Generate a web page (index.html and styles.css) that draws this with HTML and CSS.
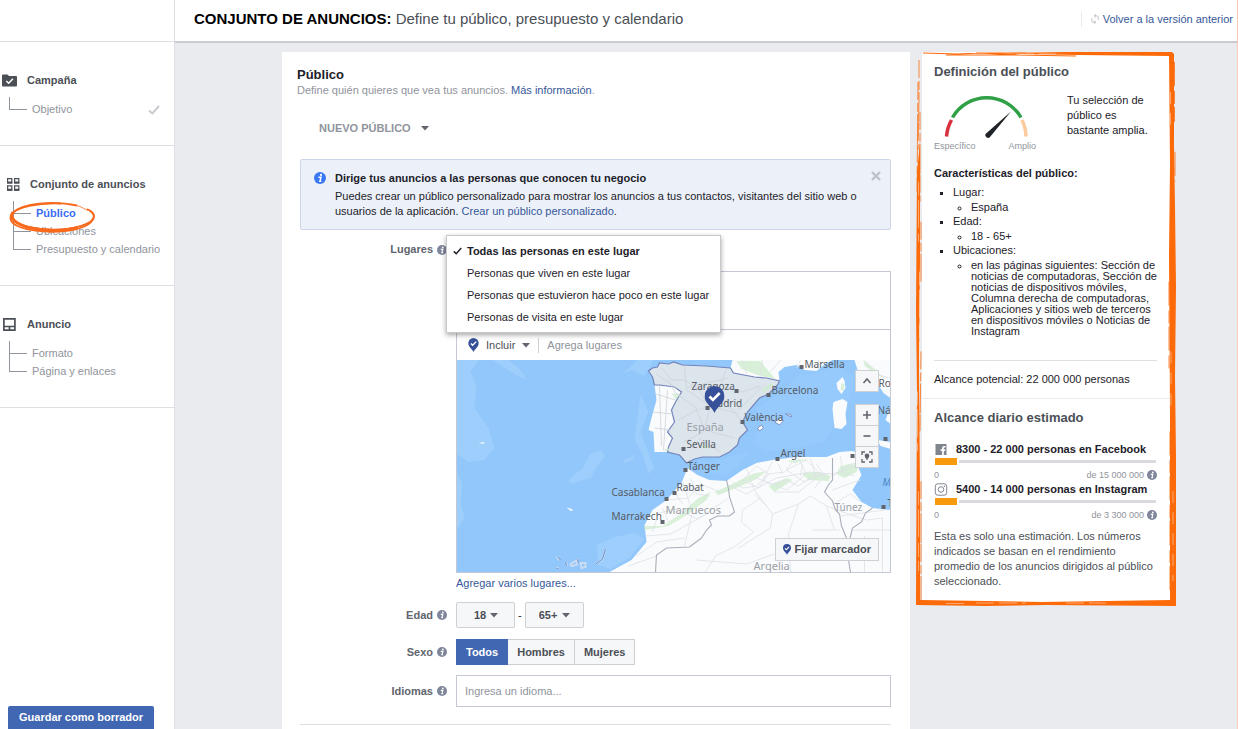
FILE: index.html
```html
<!DOCTYPE html>
<html lang="es">
<head>
<meta charset="utf-8">
<title>Conjunto de anuncios</title>
<link rel="stylesheet" href="styles.css">
</head>
<body>
<svg class="defs" aria-hidden="true">
  <symbol id="info" viewBox="0 0 12 12"><circle cx="6" cy="6" r="6" fill="currentColor"/><circle cx="7" cy="2.900" r="1.100" fill="#fff"/><path d="M4.500 5.300H7L5.900 9.200H7.300" fill="none" stroke="#fff" stroke-width="1.400"/></symbol>
  <symbol id="caret" viewBox="0 0 8 5"><path d="M0 0h8L4 4.6z" fill="currentColor"/></symbol>
  <symbol id="pin" viewBox="0 0 20 27"><path d="M10 0a10 10 0 0 1 10 10c0 7-7 10-10 17C7 20 0 17 0 10A10 10 0 0 1 10 0z" fill="#365199"/><path d="M5 10.500l3.400 3.500L15.200 7" fill="none" stroke="#fff" stroke-width="2.600"/></symbol>
  <symbol id="check" viewBox="0 0 12 10"><path d="M1 5.500l3.300 3L11 1" fill="none" stroke="currentColor" stroke-width="1.900"/></symbol>
</svg>
<div class="app">
  <nav class="sidebar" aria-label="Pasos">
    <div class="sidebar-top"></div>
    <section class="step">
      <h2 class="step-title"><svg class="step-icon" viewBox="0 0 15 13"><path d="M0 1.500Q0 .5 1 .5h4.500L7 2h7q1 0 1 1v8.500q0 1-1 1H1q-1 0-1-1z" fill="#4b4f56"/><path d="M4.300 7l2.400 2.300 4.200-4.600" fill="none" stroke="#fff" stroke-width="1.500"/></svg>Campaña</h2>
      <ul class="tree">
        <li><a href="#">Objetivo</a><svg class="done" aria-hidden="true"><use href="#check"/></svg></li>
      </ul>
    </section>
    <section class="step step-nested">
      <h2 class="step-title"><svg class="step-icon" viewBox="0 0 15 13"><g fill="none" stroke="#4b4f56" stroke-width="1.200"><path d="M1.600.6h4.200v4.300H1.600zM8.600.6h4.200v4.300H8.600zM1.600 7.900h4.200v4.300H1.600zM8.600 7.900h4.200v4.300H8.600z"/></g><path d="M1 3.500h5.300v2H1zM8 3.500h5.300v2H8zM1 10.800h5.300v2H1zM8 10.800h5.300v2H8z" fill="#4b4f56"/></svg>Conjunto de anuncios</h2>
      <ul class="tree">
        <li><a href="#" class="current">Público</a></li>
        <li><a href="#">Ubicaciones</a></li>
        <li><a href="#">Presupuesto y calendario</a></li>
      </ul>
      <svg class="scribble" viewBox="0 0 88 32" fill="none" stroke="#f8691c" aria-hidden="true">
        <path d="M68 4.500C50 .5 22 1 9 8-2 14-1 22 12 26.500c19 6 47 5.500 62-.5 12-5 14-12 6-17" stroke-width="1.800"/>
        <path d="M52 2.500C30 1.500 6 6 3 14c-2 8 15 14 39 14.500 25 .5 43-6.500 43-13.500 0-3-3-5-7-7" stroke-width="1.800"/>
        <path d="M4 11c-5 8 7 15 27 17.500 14 1.500 28 1 38-2" stroke-width="3"/>
        <path d="M62 3l9 2.500 8 4" stroke-width=".8"/>
      </svg>
    </section>
    <section class="step">
      <h2 class="step-title"><svg class="step-icon" viewBox="0 0 15 13"><path d="M1.900.9h11v11.200h-11z M2 8.500h11 M7.500 8.500v3" fill="none" stroke="#4b4f56" stroke-width="1.700"/></svg>Anuncio</h2>
      <ul class="tree">
        <li><a href="#">Formato</a></li>
        <li><a href="#">Página y enlaces</a></li>
      </ul>
    </section>
    <button class="save" type="button">Guardar como borrador</button>
  </nav>

  <div class="main">
    <header class="topbar">
      <h1><strong>CONJUNTO DE ANUNCIOS:</strong> Define tu público, presupuesto y calendario</h1>
      <a class="back" href="#"><svg viewBox="0 0 10 12" aria-hidden="true"><path d="M4.500 2H7q2 0 2 2v3M5.500 10H3Q1 10 1 8V5M6.200 0L4 2l2.200 2M3.800 8L6 10l-2.200 2" fill="none" stroke="#b0b3b8"/></svg>Volver a la versión anterior</a>
    </header>

    <div class="content">
      <main class="card">
        <h2 class="card-title">Público</h2>
        <p class="card-sub">Define quién quieres que vea tus anuncios. <a href="#">Más información</a>.</p>
        <button class="audience" type="button">NUEVO PÚBLICO <svg class="caret"><use href="#caret"/></svg></button>

        <div class="notice">
          <svg class="notice-icon" aria-hidden="true"><use href="#info"/></svg>
          <div class="notice-text">
            <h3>Dirige tus anuncios a las personas que conocen tu negocio</h3>
            <p>Puedes crear un público personalizado para mostrar los anuncios a tus contactos, visitantes del sitio web o usuarios de la aplicación. <a href="#">Crear un público personalizado</a>.</p>
          </div>
          <button class="close" type="button" aria-label="Cerrar"><svg viewBox="0 0 10 10"><path d="M1 1l8 8M9 1L1 9" stroke="#bec3c9" stroke-width="2.400"/></svg></button>
        </div>

        <div class="row row-places">
          <label class="label" for="places">Lugares <svg class="info"><use href="#info"/></svg></label>
          <div class="field">
            <ul class="menu" role="menu">
              <li><button type="button" class="selected" role="menuitemradio" aria-checked="true"><svg class="tick" aria-hidden="true"><use href="#check"/></svg>Todas las personas en este lugar</button></li>
              <li><button type="button" role="menuitemradio" aria-checked="false">Personas que viven en este lugar</button></li>
              <li><button type="button" role="menuitemradio" aria-checked="false">Personas que estuvieron hace poco en este lugar</button></li>
              <li><button type="button" role="menuitemradio" aria-checked="false">Personas de visita en este lugar</button></li>
            </ul>
            <div class="places">
              <div class="chosen"></div>
              <div class="add">
                <button class="include" type="button"><svg class="pin-small"><use href="#pin"/></svg>Incluir <svg class="caret"><use href="#caret"/></svg></button>
                <input id="places" type="text" placeholder="Agrega lugares">
              </div>
              <div class="map">
                <svg class="map-art" viewBox="0 0 434 212" preserveAspectRatio="xMidYMid slice" role="img" aria-label="Mapa de España">
                  <path fill="#92c7fb" d="M0 0h434v212H0z"/>
                  <g fill="#9dcefc">
                    <path d="M0 0h22l-8 12 6 14-2 22 14 20 6 20-10 12-16 2-12-8zM36 0h16l12 10 6 10-12-6zM165 14l10-4 12 6 6-8 4-8h-16l-6 6zM184 34l8 18-8 20 6 16 8 20-6 6-6-20-8-14z"/>
                    <path d="M134 94l10-4 4 6-8 12-6 10-20 6-2-4 14-12zM168 100l12-6-4 6-10 4zM140 185l18-8 20-4 10 6-14 18-20 12-12-4z"/>
                    <path d="M300 48l22-14 20-18 28-6 12-6 16 14-6 22-12 20-12 22-30 6-30 4-12-10 8-18zM234 104l30-4 30-10-12 16-14 10-20-4z" opacity=".45"/>
                    <path d="M0 112l6 12-2 20 4 14-8 12z"/>
                  </g>
                  <g class="land">
                    <path d="M198 25l2 15-5 18-3 12 5 2 1 20 13 0 12 3 7-20V27z"/>
                    <path d="M276 0l-2 8 3 5 21 4 25 4-1-9 6-5 12-2 8 5 12 1 10-8 6-3z"/>
                    <path d="M398 0l3 10 9 5 12 10 5 8 7 5V0z"/>
                    <path d="M386 17l2 4 1 7-4 6-4-5-1-6zM377 42l9-3 5 3-2 12 1 10-5 5-7-1-1-10-1-9z"/>
                    <path d="M421 80l13 2v7l-10-3zM429 60l5-14v18z"/>
                    <path d="M318 62l6-4 3 3-4 4zM329 54l5 0 1 3zM301 68l4-3 2 3-4 3z" stroke="#7d93c2"/>
                    <path d="M153 212l22-12 15-18-2-17 8-15 14-10 15-17 6-15 10 7 12 5 17 1 16-11 14-7 16-3 24-3 30 0 13-5 13-1 9 4-4 10 4 10-9 15 9 12 11 6 18 2v62z"/>
                    <path d="M22 83l6-1-1 2zM110 147l7 3-3 1z"/>
                    <path d="M149 189l-3 10-7 5M100 197l3 3M109 202l2 4M100 207l2 2M114 204l7-4-1 5-5 1zM124 203l5 0 0 4-4 1z" fill="none" stroke="#c9dcf2" stroke-width="2"/>
                    <path d="M149 189l-3 10-7 5M101 197l3 3M109 202l1 4M100 208l2 1M121 199l1 4" fill="none" stroke="#6d8fc8"/>
                  </g>
                  <path fill="#dce4ec" d="M192 11l4-3 5-1 2-4 9 1 5-2 9 3 24 1 24 2 3 5 21 4 12 1 13 3-2 4-9 9-9 4-12 14-5 10 5 8-8 8-2 7-8 7-10 5-17 0-8 2-8 4-7-8-12-3 1-5 4-9-5-6 7-10-3-12 4-8 6-10-7-5-15-2-5 0-2-8z"/>
                  <path fill="none" stroke="#7485ba" stroke-width="1.200" d="M198 25l-1-4-1-4-4-6 4-3 5-1 2-4 9 1 5-2 9 3 24 1 24 2 3 5 21 4 12 1 13 3-2 4-9 9-9 4-12 14-5 10 5 8-8 8-2 7-8 7-10 5-17 0-8 2-8 4-7-8-12-3 1-5 4-9-5-6 7-10-3-12 4-8 6-10-7-5-15-2z"/>
                  <g fill="#cdeccd" opacity=".75">
                    <path d="M188 170l24-4 20-12 18-14 4-8-12 6-18 16-18 12-18 0zM258 132l18-8 20-10 14-3-10 8-18 8-20 8zM345 113l16-1 13 4-2 5-20-1zM384 106l18-4-2 10-12 6-8-4zM312 126l18-8 6 2-18 12zM330 101l22-2-14 4z"/>
                    <path d="M280 1l24 0 8 10 7 8-18-4-16-6zM205 90l10-2-4 3zM385 23l3 1-1 7-3-1zM407 0l10 8 13 12-8-5-14-9zM243 86l13-1-8 4zM305 30l9-7 3 2-10 8zM215 33l9 2-5 4z"/>
                  </g>
                  <g fill="none" stroke="#cdd3db" stroke-width=".8">
                    <path d="M205 8l10 12 13 0 15 10 10 18 17-20 16 4 18-6M200 14l20 14M228 6l2 24 24 16-7 26-20 10M254 46l28 8M270 8l-8 24 22 28M212 20l6 12 24 18 6-2M222 60l18-10 8 20 30 8M242 78l22 14M282 50l26-26M230 28l42-10M199 34l20 6M196 52l20 2M198 68l16 2M203 26l2 60M211 30l-4 60"/>
                  </g>
                  <g fill="none" stroke="#dde1e7" stroke-width=".8">
                    <path d="M286 0l4 14M306 0l-2 17M324 0l-10 12M344 0l-4 8M362 0v10M410 2l6 12 18 4"/>
                    <path d="M210 140l22-2 12-14 20 8M226 122l10 30-8 34M195 155l24-6 22 10 30-20M190 176l24-2 40 -22M180 196l20-14 28-4M172 206l28-10M270 124l20 10 30-16 34-6 22 2 24-8M290 108l8 22 6 8-18 12 -1 12 12 10-18 14-20 10-10 16M304 138l12 16-2 14-32 20M316 154l26-10 12-8 16 10 8 24M310 146l-12-12M342 144l-10 30 2 38M316 102l-10 18 24 10 20-16-8-16M354 98l6 20-18 14-24 0M376 116l18-12 8 6M376 130l16-6 12-4M380 142l14-8 10 8M370 146l16 6 24 8 16-2 0 54M384 156l44-6M396 170l38 0M286 120l14-14 12 8-10 14zM330 110l20-10 14 14-16 8zM356 170l28 0M240 200l50 4 28-10M408 176v36"/>
                    <path d="M276 122l10 6 14-2 12-12 16-2 8-10M300 118l14 6 16-4 12 6 14-10 16-2M360 104l8 12-10 12M384 96l2 16 12 4M322 104l4 10M346 104l-2 12M234 118l6 16 14 2M218 132l8 12M206 148l6 14M200 160l-4 12"/>
                  </g>
                  <g fill="none" stroke="#a9afba" stroke-width="1.100">
                    <path d="M270 120l2 9 1 8 5 15-5 4-12 0-8 4 2 5-5 5-5 8-12 9-23 1-10 7-1 17"/>
                    <path d="M376 98v22l-4 5-4 7 8 9 3 9 4 4 2 12 5 12 1 16 3 18M416 148l-7 5-4 9-9 6-3 12"/>
                  </g>
                  <g fill="#61656d">
                    <path d="M278 29h4v4h-4zM343 5h4v4h-4zM310 33h4v4h-4zM284 60h4v4h-4zM249 46h4v4h-4zM225 87h4v4h-4zM319 97h4v4h-4zM227 108h4v4h-4zM216 131h4v4h-4zM208 137h4v4h-4zM204 160h4v4h-4zM427 77h4v4h-4zM394 94h4v4h-4zM425 145h4v4h-4z"/>
                  </g>
                  <g class="places-text">
                    <text x="348" y="8">Marsella</text>
                    <text x="315" y="34">Barcelona</text>
                    <text x="235" y="30">Zaragoza</text>
                    <text x="252" y="47">Madrid</text>
                    <text x="288" y="61">València</text>
                    <text x="230" y="88">Sevilla</text>
                    <text x="324" y="97">Argel</text>
                    <text x="231" y="110">Tánger</text>
                    <text x="220" y="131">Rabat</text>
                    <text x="155" y="136">Casablanca</text>
                    <text x="155" y="160">Marrakech</text>
                    <text x="422" y="27">Roma</text>
                    <text x="421" y="54">Nápoles</text>
                    <text x="431" y="147">Trípoli</text>
                    <text x="426" y="126" fill="#4b86c8" font-style="italic">Mar</text>
                  </g>
                  <g class="country-text">
                    <text x="230" y="71">España</text>
                    <text x="209" y="154">Marruecos</text>
                    <text x="378" y="151" class="minor">Túnez</text>
                    <text x="297" y="210">Argelia</text>
                  </g>
                  <use href="#pin" x="248" y="26" width="20" height="27"/>
                </svg>
                <div class="map-tools">
                  <button type="button" aria-label="Contraer" class="tool tool-up"><svg viewBox="0 0 12 12"><path d="M2.500 8L6 4l3.500 4" fill="none" stroke="#61656d" stroke-width="1.500"/></svg></button>
                  <button type="button" aria-label="Acercar" class="tool"><svg viewBox="0 0 12 12"><path d="M6 2v8M2 6h8" stroke="#61656d" stroke-width="1.600"/></svg></button>
                  <button type="button" aria-label="Alejar" class="tool"><svg viewBox="0 0 12 12"><path d="M2.500 6h7" stroke="#61656d" stroke-width="1.600"/></svg></button>
                  <button type="button" aria-label="Centrar" class="tool"><svg viewBox="0 0 12 12"><path d="M1 4V1h3M8 1h3v3M11 8v3H8M4 11H1V8" fill="none" stroke="#61656d" stroke-width="1.300"/><path d="M6 2.500a2.300 2.300 0 0 1 2.300 2.500C8.300 6.600 6.600 7.500 6 9.500 5.400 7.500 3.700 6.600 3.700 5A2.300 2.300 0 0 1 6 2.500z" fill="#61656d"/></svg></button>
                </div>
                <button class="drop-pin" type="button"><svg viewBox="0 0 20 27"><use href="#pin"/></svg>Fijar marcador</button>
              </div>
            </div>
            <a class="bulk" href="#">Agregar varios lugares...</a>
          </div>
        </div>

        <div class="row row-age">
          <label class="label" for="age-min">Edad <svg class="info"><use href="#info"/></svg></label>
          <div class="field ages">
            <span class="select"><select id="age-min"><option>18</option></select><svg class="caret"><use href="#caret"/></svg></span>
            <span>-</span>
            <span class="select select-wide"><select aria-label="Edad máxima"><option>65+</option></select><svg class="caret"><use href="#caret"/></svg></span>
          </div>
        </div>

        <div class="row row-sex">
          <span class="label" id="sex">Sexo <svg class="info"><use href="#info"/></svg></span>
          <div class="field segments" role="group" aria-labelledby="sex">
            <button type="button" class="on" aria-pressed="true">Todos</button><button type="button" aria-pressed="false">Hombres</button><button type="button" aria-pressed="false">Mujeres</button>
          </div>
        </div>

        <div class="row row-lang">
          <label class="label" for="lang">Idiomas <svg class="info"><use href="#info"/></svg></label>
          <div class="field"><input class="lang" id="lang" type="text" placeholder="Ingresa un idioma..."></div>
        </div>
        <hr class="rule">
      </main>

      <aside class="summary">
        <section class="definition">
          <h2>Definición del público</h2>
          <div class="gauge-row">
            <div class="gauge">
              <svg viewBox="0 0 106 46" aria-hidden="true">
                <g fill="none" stroke-width="3.500">
                  <path d="M12.500 43.500A39.500 39.500 0 0 1 17.500 27" stroke="#d9303e"/>
                  <path d="M18.500 24.500A39.500 39.500 0 0 1 87 24.500" stroke="#2fa045"/>
                  <path d="M88 27A39.500 39.500 0 0 1 92 43.500" stroke="#fbcb9d"/>
                </g>
                <path d="M51.500 41L77 18.500 56 44q-1.500 1.700-3.500.2T51.500 41z" fill="#1f2328"/>
              </svg>
              <div class="gauge-ends"><span>Específico</span><span>Amplio</span></div>
            </div>
            <p>Tu selección de público es bastante amplia.</p>
          </div>
          <h3>Características del público:</h3>
          <ul class="traits">
            <li>Lugar:<ul><li>España</li></ul></li>
            <li>Edad:<ul><li>18 - 65+</li></ul></li>
            <li>Ubicaciones:<ul><li>en las páginas siguientes: Sección de noticias de computadoras, Sección de noticias de dispositivos móviles, Columna derecha de computadoras, Aplicaciones y sitios web de terceros en dispositivos móviles o Noticias de Instagram</li></ul></li>
          </ul>
          <p class="potential">Alcance potencial: 22 000 000 personas</p>
        </section>
        <section class="reach">
          <h2>Alcance diario estimado</h2>
          <div class="network">
            <h3><svg viewBox="0 0 13 13" aria-hidden="true"><path d="M1 1h11v11H9.300V8h1.300l.2-1.700H9.300V5.200q0-.8.900-.8h.8V2.900H9.600q-2 0-2 2v1.400H6.200V8h1.400v4H1z" fill="#7f858f"/></svg>8300 - 22 000 personas en Facebook</h3>
            <div class="bar"><span class="bar-fill"></span></div>
            <div class="scale"><span>0</span><span>de 15 000 000 <svg class="info"><use href="#info"/></svg></span></div>
          </div>
          <div class="network">
            <h3><svg viewBox="0 0 13 13" aria-hidden="true"><g fill="none" stroke="#7f858f"><rect x=".8" y=".8" width="11.400" height="11.400" rx="2.500"/><circle cx="6.500" cy="6.500" r="2.800"/></g><circle cx="9.900" cy="3.200" r=".7" fill="#7f858f"/></svg>5400 - 14 000 personas en Instagram</h3>
            <div class="bar"><span class="bar-fill"></span></div>
            <div class="scale"><span>0</span><span>de 3 300 000 <svg class="info"><use href="#info"/></svg></span></div>
          </div>
          <p class="note">Esta es solo una estimación. Los números indicados se basan en el rendimiento promedio de los anuncios dirigidos al público seleccionado.</p>
        </section>
        <svg class="frame" viewBox="0 0 261 555" preserveAspectRatio="none" aria-hidden="true">
          <g fill="#fd6a0a">
            <path d="M90 1l60-1 106 0 2 2v3l-6-1-90-1-60-1z"/>
            <path d="M253 3l5 0 0 92 1 60 1 80-1 90 1 80 0 148-6 0 0-190-1-160 1-90z"/>
            <path d="M0 549l5 0 120 2 130-2h5v6l-130-1-60 1-70-1z"/>
            <path d="M1 120l3-30 0 120-1 110 1 120 0 110h-4l1-210-1-80z"/>
          </g>
          <g fill="none" stroke="#fd6a0a">
            <path d="M7 1l35 1 22-1 40 2M30 3l70 0 60 1M60 1l50 0" stroke-width="1.200"/>
            <path d="M3 8l0 40-1 50M4 60l0 90M2 30l-1 110M5 170l0 60M5 300l-1 80M5 430l0 120" stroke-width=".8" stroke-dasharray="18 3 9 2 30 1"/>
            <path d="M258.500 10v60M253 230v90M259 100v30M254 380v160" stroke-width=".8" stroke-dasharray="24 5 13 3"/>
          </g>
          <g fill="none" stroke="#fff" stroke-width=".7" opacity=".6">
            <path d="M2.500 130v60M3.500 220v90M1.500 340v60M2.500 440v80" stroke-dasharray="14 4 28 6"/>
            <path d="M255 300v60M257 440v90M254.500 40v40" stroke-dasharray="12 9"/>
            <path d="M60 552h50M150 552h40M100 2h40M30 552.500h20" stroke-dasharray="18 5"/>
          </g>
        </svg>
      </aside>
    </div>
  </div>
</div>
</body>
</html>
```
FILE: styles.css
```css
* { box-sizing: border-box; }

body {
  margin: 0;
  background: #e9ebee;
  color: #1d2129;
  font: 11px/15px "Liberation Sans", Arial, sans-serif;
}

h1, h2, h3, p, ul { margin: 0; padding: 0; }
h2, h3 { font-weight: bold; }
a { color: #365899; text-decoration: none; }
button, input, select { font: inherit; color: inherit; }
button { cursor: pointer; }
svg { display: block; flex: none; }
input::placeholder { color: #90949c; opacity: 1; }

.defs { position: absolute; width: 0; height: 0; }
.caret { width: 8px; height: 5px; color: #61656d; }
.info { width: 10px; height: 10px; color: #7f869a; }

.app {
  display: grid;
  grid-template-columns: 175px 1fr;
  height: 100vh;
  overflow: hidden;
  border-right: 1px solid #fbc9ae;
}

/* Sidebar */
.sidebar {
  display: flex;
  flex-direction: column;
  min-height: 0;
  background: #fff;
  border-right: 1px solid #dddfe2;
}
.sidebar-top { height: 42px; border-bottom: 1px solid #dddfe2; }
.step {
  position: relative;
  padding: 30px 14px 27px 2px;
  border-bottom: 1px solid #dddfe2;
}
.step-nested { padding-left: 6px; }
.step-title {
  display: flex;
  align-items: center;
  gap: 10px;
  font-size: 11px;
  line-height: 16px;
  color: #4b4f56;
}
.step-nested .step-title { gap: 9px; }
.step-icon { width: 15px; height: 13px; }
.tree { margin: 9px 0 0 7px; list-style: none; color: #90949c; }
.tree::before { content: ""; display: block; height: 3px; border-left: 1px solid #90949c; }
.tree li {
  display: flex;
  height: 18px;
  line-height: 18px;
  border-left: 1px solid #90949c;
  white-space: nowrap;
}
.tree li::before {
  content: "";
  flex: none;
  width: 17px;
  height: 9px;
  margin-right: 5px;
  border-bottom: 1px solid #90949c;
}
.tree li:last-child { border-left: 0; }
.tree li:last-child::before { border-left: 1px solid #90949c; }
.tree a { color: #90949c; }
.tree .current { color: #3b6df5; font-weight: bold; }
.done { width: 12px; height: 10px; margin: 5px 0 0 auto; color: #c6c9ce; }
.scribble { position: absolute; left: 9px; top: 55px; width: 88px; height: 32px; }
.save {
  align-self: flex-start;
  margin: auto 0 0 8px;
  padding: 0 11px;
  height: 23px;
  border: 0;
  border-radius: 2px 2px 0 0;
  background: #4267b2;
  color: #fff;
  font-weight: bold;
}

/* Top bar */
.main { display: flex; flex-direction: column; min-width: 0; min-height: 0; }
.topbar {
  display: flex;
  flex: none;
  align-items: center;
  justify-content: space-between;
  height: 43px;
  padding: 0 4px 3px 19px;
  background: #fff;
  border-bottom: 2px solid #c9cbd1;
}
.topbar h1 { font-size: 15px; font-weight: normal; line-height: 20px; color: #4b4f56; }
.topbar strong { color: #000; }
.back {
  display: flex;
  align-items: center;
  gap: 4px;
  padding-left: 9px;
  border-left: 1px solid #e9ebee;
}
.back svg { width: 8px; height: 10px; }

.content {
  display: flex;
  flex: 1;
  align-items: flex-start;
  gap: 12px;
  min-height: 0;
  padding: 9px 67px 0 107px;
}

/* Audience card */
.card { flex: 1; min-width: 0; min-height: 690px; padding: 15px 19px 20px 18px; background: #fff; }
.card-title { margin-left: -3px; font-size: 13px; line-height: 16px; }
.card-sub { margin-left: -3px; color: #90949c; }
.audience {
  display: flex;
  align-items: center;
  gap: 10px;
  height: 30px;
  margin: 15px 0 16px 19px;
  padding: 0;
  border: 0;
  background: none;
  color: #90949c;
  font-weight: bold;
}
.notice {
  display: flex;
  align-items: flex-start;
  padding: 11px 9px 10px 13px;
  border: 1px solid #ccd6e8;
  border-radius: 2px;
  background: #ecf1f9;
}
.notice-icon { width: 12px; height: 12px; margin: 1px 9px 0 0; color: #3b78f3; }
.notice-text { flex: 1; }
.notice-text h3 { margin-bottom: 3px; font-size: 11px; }
.close { padding: 0; border: 0; background: none; }
.close svg { width: 10px; height: 10px; }

/* Form rows */
.row { display: grid; grid-template-columns: 147px 1fr; column-gap: 9px; }
.label {
  display: flex;
  align-items: center;
  justify-content: flex-end;
  gap: 4px;
  color: #61656d;
  font-weight: bold;
}
.row-places .label { align-self: start; margin-top: 12px; }
.field { position: relative; min-width: 0; }

.menu {
  position: absolute;
  z-index: 2;
  top: 5px;
  left: -10px;
  padding: 4px 0;
  border: 1px solid #c8c9cc;
  background: #fff;
  box-shadow: 0 2px 5px rgba(0, 0, 0, .35);
  list-style: none;
}
.menu button {
  display: flex;
  align-items: center;
  width: 100%;
  height: 22px;
  padding: 0 11px 0 20px;
  border: 0;
  background: none;
  white-space: nowrap;
}
.menu .selected { padding-left: 6px; font-weight: bold; }
.tick { width: 9px; height: 8px; margin-right: 5px; }

.places { margin-top: 41px; border: 1px solid #c3c8d3; }
.chosen { height: 58px; border-bottom: 1px solid #c3c8d3; }
.add { display: flex; align-items: center; height: 30px; padding-left: 11px; }
.include {
  display: flex;
  align-items: center;
  gap: 7px;
  padding: 0 8px 0 0;
  border: 0;
  border-right: 1px solid #ccd0d5;
  background: none;
  color: #4b4f56;
}
.pin-small { width: 11px; height: 14px; }
.add input { flex: 1; min-width: 0; padding: 0 8px; border: 0; outline: 0; background: none; }
.map { position: relative; height: 212px; overflow: hidden; }
.map-art { width: 100%; height: 100%; }
.land { fill: #fafbfc; }
.places-text { font: 10px "Noto Sans", "Open Sans", sans-serif; fill: #565b64; }
.country-text { font: 11px "Noto Sans", "Open Sans", sans-serif; fill: #9a9ea6; }
.minor { font-size: 10px; }
.map-tools { position: absolute; top: 10px; right: 11px; width: 24px; }
.tool {
  display: grid;
  place-items: center;
  width: 100%;
  height: 22px;
  margin-top: -1px;
  padding: 0;
  border: 1px solid #ced0d4;
  background: #f6f7f9;
}
.tool-up { margin: 0 0 13px; }
.tool svg { width: 12px; height: 12px; }
.drop-pin {
  position: absolute;
  right: 11px;
  bottom: 11px;
  display: flex;
  align-items: center;
  gap: 4px;
  height: 23px;
  padding: 0 7px;
  border: 1px solid #ced0d4;
  background: #f6f7f9;
  color: #4b4f56;
  font-weight: bold;
}
.drop-pin svg { width: 8px; height: 11px; }
.bulk { display: block; margin-top: 3px; }

.row-age { margin-top: 11px; }
.ages { display: flex; align-items: center; gap: 3px; }
.select { display: grid; width: 59px; color: #4b4f56; }
.select > * { grid-area: 1 / 1; }
.select select {
  appearance: none;
  height: 26px;
  padding: 0 0 0 17px;
  border: 1px solid #ced0d4;
  border-radius: 2px;
  background: #f6f7f9;
  font-weight: bold;
}
.select .caret { align-self: center; justify-self: end; margin-right: 17px; pointer-events: none; }
.select-wide select { padding-left: 13px; }
.select-wide .caret { margin-right: 14px; }

.row-sex { margin-top: 11px; }
.segments { display: flex; }
.segments button {
  height: 26px;
  padding: 0 9px;
  border: 1px solid #ced0d4;
  border-left-width: 0;
  background: #f6f7f9;
  color: #4b4f56;
  font-weight: bold;
}
.segments .on { border-color: #4267b2; border-left-width: 1px; background: #4267b2; color: #fff; }

.row-lang { margin-top: 10px; }
.lang { width: 100%; height: 32px; padding: 0 8px; border: 1px solid #c3c8d3; background: #fff; }
.rule { margin: 17px 0 0; border: 0; border-top: 1px solid #dddfe2; }

/* Summary */
.summary { position: relative; width: 248px; background: #fff; }
.summary h2 { font-size: 13px; line-height: 16px; color: #4b4f56; }
.summary h3 { font-size: 11px; }
.definition { padding: 12px 13px 0 12px; border-bottom: 1px solid #e9ebee; }
.gauge-row { display: flex; gap: 27px; margin-top: 13px; }
.gauge { width: 106px; }
.gauge svg { width: 106px; height: 46px; }
.gauge-ends {
  display: flex;
  justify-content: space-between;
  padding-right: 4px;
  color: #90949c;
  font-size: 9px;
  line-height: 14px;
}
.gauge-row p { flex: 1; }
.definition h3 { margin-top: 13px; }
.traits { margin-top: 4px; padding: 0 0 22px 19px; border-bottom: 1px solid #dddfe2; list-style: square; line-height: 14px; }
.traits ul { padding: 3px 0 1px 18px; list-style: circle; line-height: 11px; }
.potential { padding: 11px 0; }

.reach { padding: 11px 13px 14px 12px; }
.network h3 { display: flex; align-items: center; gap: 8px; height: 16px; }
.network h3 svg { width: 14px; height: 13px; }
.reach h2 { margin-bottom: 15px; }
.bar { display: flex; align-items: center; height: 8px; margin: 0 1px; background: linear-gradient(#d8dadf, #d8dadf) center / 100% 3px no-repeat; }
.bar-fill { width: 24px; height: 7px; border-right: 2px solid #fff; background: #f79a0b; }
.scale {
  display: flex;
  justify-content: space-between;
  height: 16px;
  padding-top: 4px;
  color: #90949c;
  font-size: 9px;
  line-height: 11px;
}
.scale span { display: flex; align-items: center; gap: 3px; }
.note { margin-top: 8px; color: #4b4f56; }
.frame { position: absolute; top: 0; left: -6px; width: calc(100% + 13px); height: calc(100% + 3px); pointer-events: none; }
```
